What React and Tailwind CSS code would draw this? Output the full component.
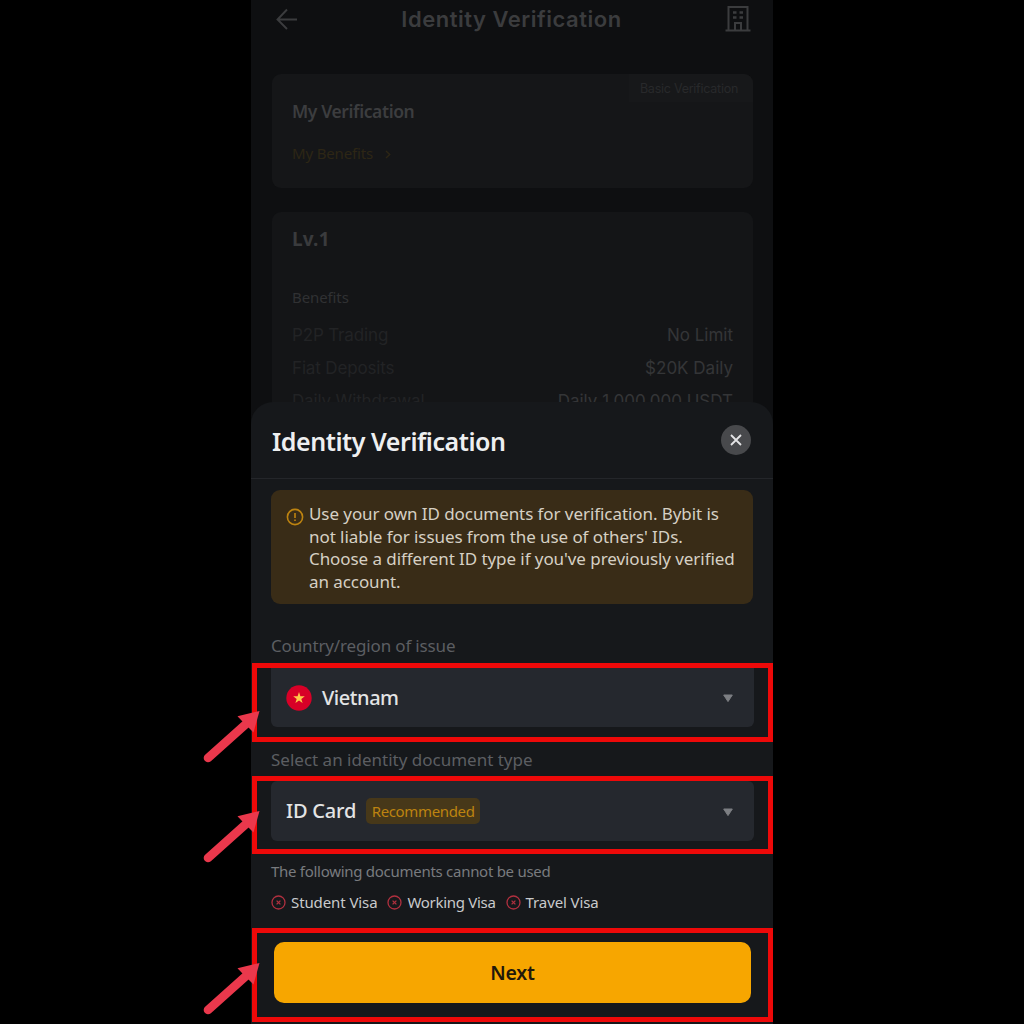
import React from "react";

const benefits = [
  ["P2P Trading", "No Limit"],
  ["Fiat Deposits", "$20K Daily"],
  ["Daily Withdrawal", "Daily 1,000,000 USDT"],
];

function Arrow({ className }) {
  return (
    <svg className={`absolute left-[-55px] h-[56px] w-[60px] ${className}`} viewBox="0 0 60 56" fill="none">
      <path d="M6 49 L44 15" stroke="#ea384c" strokeWidth="8.6" strokeLinecap="round" />
      <path d="M57.5 2 L35.5 7.2 L40.5 12.5 L48 20 L51.5 23.5 Z" fill="#ea384c" />
    </svg>
  );
}

function Highlight({ className, arrow, children }) {
  return (
    <div className={`relative ml-px border-[5px] border-[#ee0909] ${className}`}>
      {children}
      <Arrow className={arrow} />
    </div>
  );
}

function Caret() {
  return (
    <svg className="mt-[2px] h-[9px] w-[12px]" viewBox="0 0 12 9">
      <path d="M1.7 1 H10.3 L6 7.6 Z" fill="#7d7f83" stroke="#7d7f83" strokeWidth="1" strokeLinejoin="round" />
    </svg>
  );
}

function Forbidden({ children, className }) {
  return (
    <div className="flex items-center">
      <svg className="mr-[5px] h-[15px] w-[15px]" viewBox="0 0 15 15" fill="none" stroke="#b0303f" strokeWidth="1.3">
        <circle cx="7.5" cy="7.5" r="6.5" />
        <path d="M5.6 5.6 L9.4 9.4 M9.4 5.6 L5.6 9.4" />
      </svg>
      <span className={`whitespace-nowrap text-[15px] leading-[20px] text-[#c9cacc] ${className}`}>{children}</span>
    </div>
  );
}

export default function App() {
  return (
    <div className="flex h-[1024px] w-[1024px] justify-center overflow-hidden bg-black font-['Noto_Sans',sans-serif]">
      <div className="relative h-[1024px] w-[522px] bg-[#0e0f11]">
        <header className="flex h-[38px] items-center justify-between pl-[25px] pr-[22px] text-[#3b3c3e]">
          <svg className="h-[22px] w-[22px]" viewBox="0 0 22 22" fill="none" stroke="currentColor" strokeWidth="1.9">
            <path d="M21 11.5 H2 M11 1.5 L1.5 11.5 L11 21" />
          </svg>
          <h1 className="whitespace-nowrap font-['Inter',sans-serif] text-[22px] font-semibold leading-[28px] tracking-[0.52px]">Identity Verification</h1>
          <svg className="mb-[2px] h-[27px] w-[26px]" viewBox="0 0 26 27" fill="none" stroke="currentColor" strokeWidth="2">
            <path d="M3.5 25 V2 H22.5 V25 M0.5 25.5 H25.5 M10 25 V18 H16 V25" />
            <path d="M8 7.5 H11.5 M14.5 7.5 H18 M8 12.5 H11.5 M14.5 12.5 H18" strokeWidth="2.4" />
          </svg>
        </header>

        <section className="relative ml-[21px] mt-[36px] h-[114px] w-[481px] rounded-[9px] bg-[#151618] px-[20px] pt-[25px]">
          <div className="absolute right-0 top-0 flex h-[28px] w-[124px] items-center justify-center rounded-tr-[9px] bg-[#17181a] pr-[4px] pt-[2px]">
            <span className="whitespace-nowrap font-['Inter',sans-serif] text-[12.5px] tracking-[-0.25px] text-[#28292b]">Basic Verification</span>
          </div>
          <h2 className="text-[17.5px] font-semibold leading-[24px] tracking-[-0.4px] text-[#3c3d3f]">My Verification</h2>
          <div className="mt-[20px] flex items-center text-[#2d2615]">
            <span className="text-[15px] leading-[20px] tracking-[-0.15px]">My Benefits</span>
            <svg className="ml-[12px] mt-[2px] h-[9px] w-[6px]" viewBox="0 0 6 9" fill="none" stroke="currentColor" strokeWidth="1.4"><path d="M1 1 L4.7 4.5 L1 8" /></svg>
          </div>
        </section>

        <section className="ml-[21px] mt-[24px] h-[240px] w-[481px] rounded-[9px] bg-[#141517] px-[20px] pt-[14px]">
          <h2 className="text-[19px] font-bold leading-[26px] tracking-[0.2px] text-[#3a3b3d]">Lv.1</h2>
          <p className="mt-[35px] text-[15px] leading-[20px] tracking-[-0.1px] text-[#303133]">Benefits</p>
          <div className="mt-[12px] font-['Inter',sans-serif] text-[17px] leading-[33px]">
            {benefits.map(([name, value]) => (
              <div key={name} className="flex justify-between">
                <span className="tracking-[-0.15px] text-[#222325]">{name}</span>
                <span className="text-[#343537]">{value}</span>
              </div>
            ))}
          </div>
        </section>

        <div className="absolute inset-x-0 bottom-0 h-[622px] rounded-t-[22px] bg-[#16181b]">
          <div className="flex h-[77px] items-center justify-between border-b border-[#24262a] pl-[21px] pr-[22px]">
            <h2 className="mt-[1px] whitespace-nowrap text-[25px] font-semibold leading-[30px] tracking-[-0.45px] text-[#eeeff0]">Identity Verification</h2>
            <div className="flex h-[30px] w-[30px] items-center justify-center rounded-full bg-[#48494c]">
              <svg className="h-[12px] w-[12px]" viewBox="0 0 12 12" fill="none" stroke="#e4e4e6" strokeWidth="1.8"><path d="M1 1 L11 11 M11 1 L1 11" /></svg>
            </div>
          </div>

          <div className="ml-[20px] mt-[11px] flex h-[114px] w-[482px] rounded-[9px] bg-[#392c17] pl-[15px] pt-[13px]">
            <svg className="mr-[5px] mt-[5px] h-[18px] w-[18px] shrink-0" viewBox="0 0 18 18" fill="none" stroke="#bd8310" strokeWidth="1.6">
              <circle cx="9" cy="9" r="7.6" />
              <path d="M9 5 V10 M9 11.5 V13" />
            </svg>
            <p className="whitespace-nowrap text-[17px] leading-[22.7px] tracking-[-0.07px] text-[#d6d0c4]">
              Use your own ID documents for verification. Bybit is<br />
              not liable for issues from the use of others' IDs.<br />
              Choose a different ID type if you've previously verified<br />
              an account.
            </p>
          </div>

          <p className="ml-[20px] mt-[30px] h-[29px] text-[17px] leading-[24px] tracking-[-0.15px] text-[#5c5e62]">Country/region of issue</p>

          <Highlight className="h-[79px] px-[14px]" arrow="top-[41px]">
            <div className="flex h-[59px] items-center rounded-b-[6px] bg-[#25282e] pl-[15px] pr-[20px]">
              <svg className="mr-[10px] h-[26px] w-[26px]" viewBox="0 0 26 26">
                <circle cx="13" cy="13" r="12.7" fill="#d80027" />
                <path d="M13 7 L14.4 11.3 H18.8 L15.3 13.9 L16.6 18.1 L13 15.5 L9.4 18.1 L10.7 13.9 L7.2 11.3 H11.6 Z" fill="#ffc84a" />
              </svg>
              <span className="text-[20px] font-medium leading-[28px] tracking-[-0.45px] text-[#e3e4e5]">Vietnam</span>
              <div className="ml-auto"><Caret /></div>
            </div>
          </Highlight>

          <p className="ml-[20px] h-[34px] pt-[6px] text-[17px] leading-[24px] text-[#5c5e62]">Select an identity document type</p>

          <Highlight className="h-[78px] px-[14px]" arrow="top-[28px]">
            <div className="flex h-[60px] items-center rounded-[6px] bg-[#25282e] pl-[15px] pr-[20px]">
              <span className="text-[20px] font-medium leading-[28px] tracking-[-0.2px] text-[#e3e4e5]">ID Card</span>
              <div className="ml-[10px] flex h-[26px] w-[114px] items-center justify-center rounded-[5px] bg-[#473819]">
                <span className="text-[15px] leading-[20px] tracking-[-0.35px] text-[#bd8310]">Recommended</span>
              </div>
              <div className="ml-auto"><Caret /></div>
            </div>
          </Highlight>

          <p className="ml-[20px] mt-[7px] text-[15px] leading-[20px] tracking-[-0.28px] text-[#797b7f]">The following documents cannot be used</p>
          <div className="ml-[20px] mt-[11px] flex h-[36px] items-start gap-[10px]">
            <Forbidden className="tracking-[-0.1px]">Student Visa</Forbidden>
            <Forbidden className="tracking-[-0.3px]">Working Visa</Forbidden>
            <Forbidden className="tracking-[-0.1px]">Travel Visa</Forbidden>
          </div>

          <Highlight className="h-[94px] px-[17px] pt-[9px]" arrow="top-[28px]">
            <button className="block h-[61px] w-full rounded-[10px] bg-[#f7a600] text-[19.5px] font-semibold tracking-[-0.25px] text-[#22180a]">Next</button>
          </Highlight>
        </div>
      </div>
    </div>
  );
}
